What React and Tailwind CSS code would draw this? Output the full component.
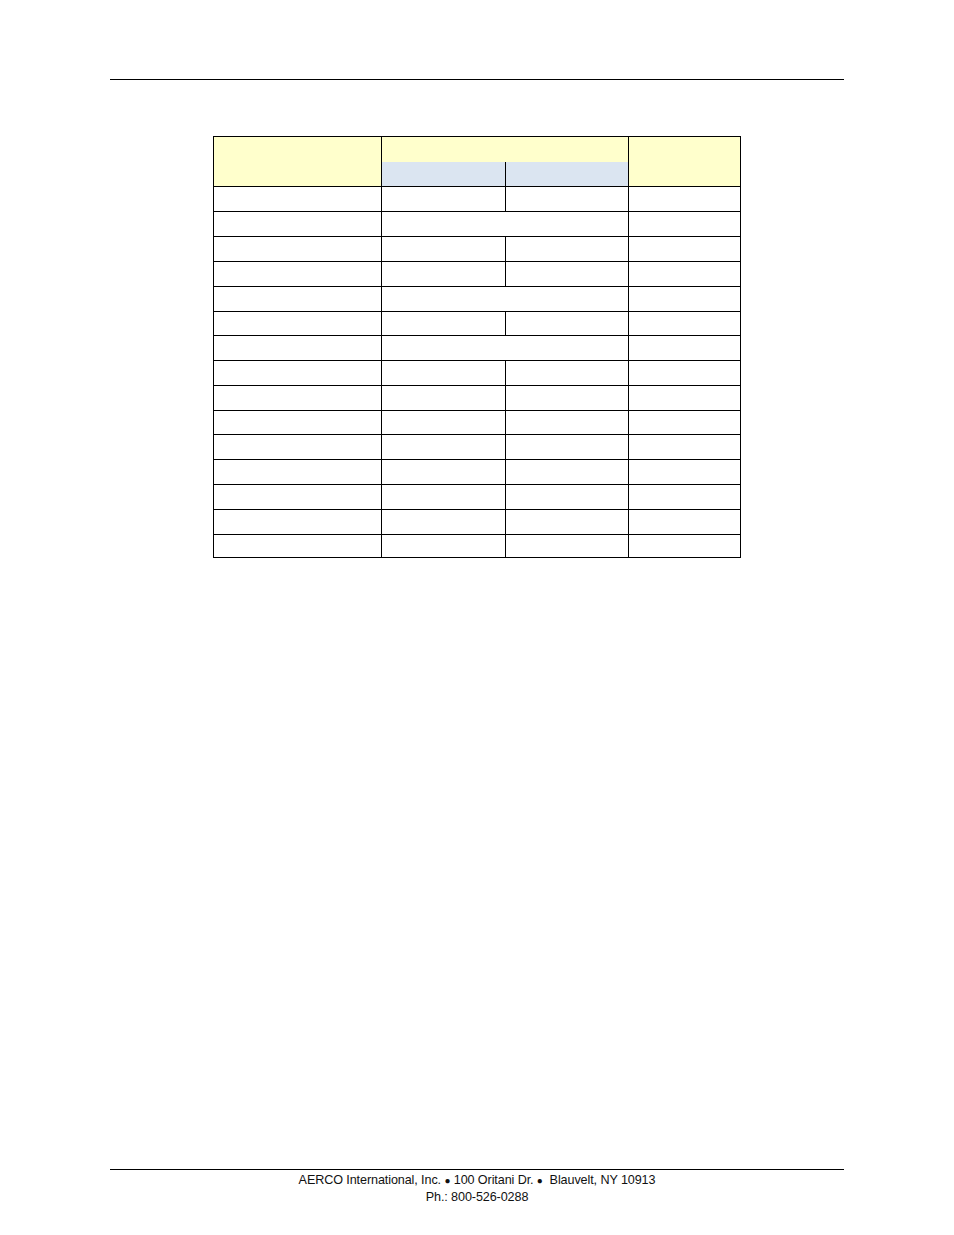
import React from "react";

// Data rows: true = middle columns are merged into one cell
const ROWS = [
  { h: 25, merged: false },
  { h: 25, merged: true },
  { h: 25, merged: false },
  { h: 25, merged: false },
  { h: 25, merged: true },
  { h: 24, merged: false },
  { h: 25, merged: true },
  { h: 25, merged: false },
  { h: 25, merged: false },
  { h: 24, merged: false },
  { h: 25, merged: false },
  { h: 25, merged: false },
  { h: 25, merged: false },
  { h: 25, merged: false },
  { h: 23, merged: false },
];

const cell = "border border-black p-0";

export default function App() {
  return (
    <div
      className="relative w-[954px] h-[1235px] bg-white text-black"
      style={{ fontFamily: '"Liberation Sans", Arial, sans-serif' }}
    >
      {/* header rule */}
      <div className="pt-[79px] px-[110px]">
        <div className="h-px bg-black" />
      </div>

      {/* table */}
      <div className="pt-[56px] pl-[213px]">
        <table className="border-collapse table-fixed w-[527px]">
          <colgroup>
            <col className="w-[168px]" />
            <col className="w-[124px]" />
            <col className="w-[123px]" />
            <col className="w-[112px]" />
          </colgroup>
          <tbody>
            <tr className="h-[25px]">
              <td rowSpan={2} className={`${cell} bg-[#ffffcc]`} />
              <td colSpan={2} className={`${cell} border-b-0 bg-[#ffffcc]`} />
              <td rowSpan={2} className={`${cell} bg-[#ffffcc]`} />
            </tr>
            <tr className="h-[25px]">
              <td className={`${cell} border-t-0 bg-[#dbe5f1]`} />
              <td className={`${cell} border-t-0 bg-[#dbe5f1]`} />
            </tr>
            {ROWS.map((r, i) => (
              <tr key={i} style={{ height: r.h }}>
                <td className={cell} />
                {r.merged ? (
                  <td colSpan={2} className={cell} />
                ) : (
                  <>
                    <td className={cell} />
                    <td className={cell} />
                  </>
                )}
                <td className={cell} />
              </tr>
            ))}
          </tbody>
        </table>
      </div>

      {/* footer */}
      <div className="absolute left-0 right-0 top-[1169px] px-[110px]">
        <div className="h-px bg-black" />
        <div className="pt-[2px] text-center text-[12.6px] leading-[17px] tracking-[-0.1px] text-[#111]">
          <div>
            AERCO International, Inc. <span className="text-[10px]">●</span> 100 Oritani Dr.{" "}
            <span className="text-[10px]">●</span>&nbsp; Blauvelt, NY 10913
          </div>
          <div>Ph.: 800-526-0288</div>
        </div>
      </div>
    </div>
  );
}
